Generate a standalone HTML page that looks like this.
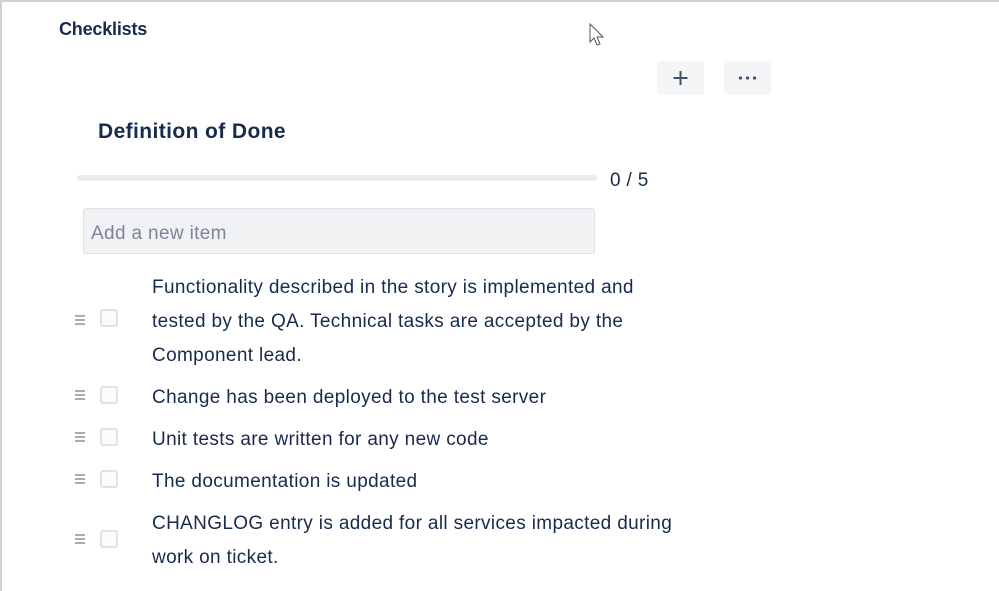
<!DOCTYPE html>
<html><head><meta charset="utf-8"><style>
body{margin:0;width:999px;height:591px;background:#fff;font-family:"Liberation Sans",sans-serif;color:#172b4d;position:relative;overflow:hidden}
.frame{position:absolute;left:0;top:0;width:997px;height:589px;border-top:2px solid #d0d0d0;border-left:2px solid #d0d0d0}
.abs{position:absolute}
.t{font-size:19px;line-height:34px;white-space:nowrap;letter-spacing:0.35px}
.btn{position:absolute;top:61px;width:47px;height:34px;background:#f4f5f7;border-radius:4px}
.cb{position:absolute;left:100px;width:18px;height:18px;border:2px solid #dfe1e6;border-radius:3px;background:#fafbfc;box-sizing:border-box}
.dr{position:absolute;left:75px;width:11px}
.dr i{display:block;height:1.5px;background:#a5adba;margin-bottom:2.5px;width:10px}
</style></head><body>
<div class="frame"></div>
<div class="abs" style="left:59px;top:19px;font-size:18px;font-weight:bold;letter-spacing:-0.2px">Checklists</div>
<svg class="abs" style="left:588px;top:23px" width="20" height="28" viewBox="0 0 20 28"><path d="M2 1 L2 19 L6 15 L9 22 L12 21 L9 14 L15 14 Z" fill="#fff" stroke="#555" stroke-width="1"/></svg>
<div class="btn" style="left:657px"><svg width="47" height="34"><path d="M23.5 10v14M16.5 17h14" stroke="#42526e" stroke-width="2"/></svg></div>
<div class="btn" style="left:724px"><svg width="47" height="34"><circle cx="16.5" cy="17" r="1.6" fill="#42526e"/><circle cx="23.5" cy="17" r="1.6" fill="#42526e"/><circle cx="30.5" cy="17" r="1.6" fill="#42526e"/></svg></div>
<div class="abs" style="left:98px;top:120px;font-size:21px;font-weight:bold;letter-spacing:0.4px">Definition of Done</div>
<div class="abs" style="left:77px;top:175px;width:520px;height:6px;background:#ebecf0;border-radius:3px"></div>
<div class="abs t" style="left:610px;top:164px">0 / 5</div>
<div class="abs" style="left:83px;top:208px;width:512px;height:46px;background:#f1f2f4;border:1px solid #dfe1e6;border-radius:3px;box-sizing:border-box"></div>
<div class="abs t" style="left:91px;top:217px;color:#7a869a">Add a new item</div>

<div class="abs t" style="left:152px;top:271px">Functionality described in the story is implemented and<br>tested by the QA. Technical tasks are accepted by the<br>Component lead.</div>
<div class="dr" style="top:315px"><i></i><i></i><i></i></div><div class="cb" style="top:309px"></div>

<div class="abs t" style="left:152px;top:381px">Change has been deployed to the test server</div>
<div class="dr" style="top:390px"><i></i><i></i><i></i></div><div class="cb" style="top:386px"></div>

<div class="abs t" style="left:152px;top:423px">Unit tests are written for any new code</div>
<div class="dr" style="top:432px"><i></i><i></i><i></i></div><div class="cb" style="top:428px"></div>

<div class="abs t" style="left:152px;top:465px">The documentation is updated</div>
<div class="dr" style="top:474px"><i></i><i></i><i></i></div><div class="cb" style="top:470px"></div>

<div class="abs t" style="left:152px;top:507px">CHANGLOG entry is added for all services impacted during<br>work on ticket.</div>
<div class="dr" style="top:534px"><i></i><i></i><i></i></div><div class="cb" style="top:530px"></div>
</body></html>
